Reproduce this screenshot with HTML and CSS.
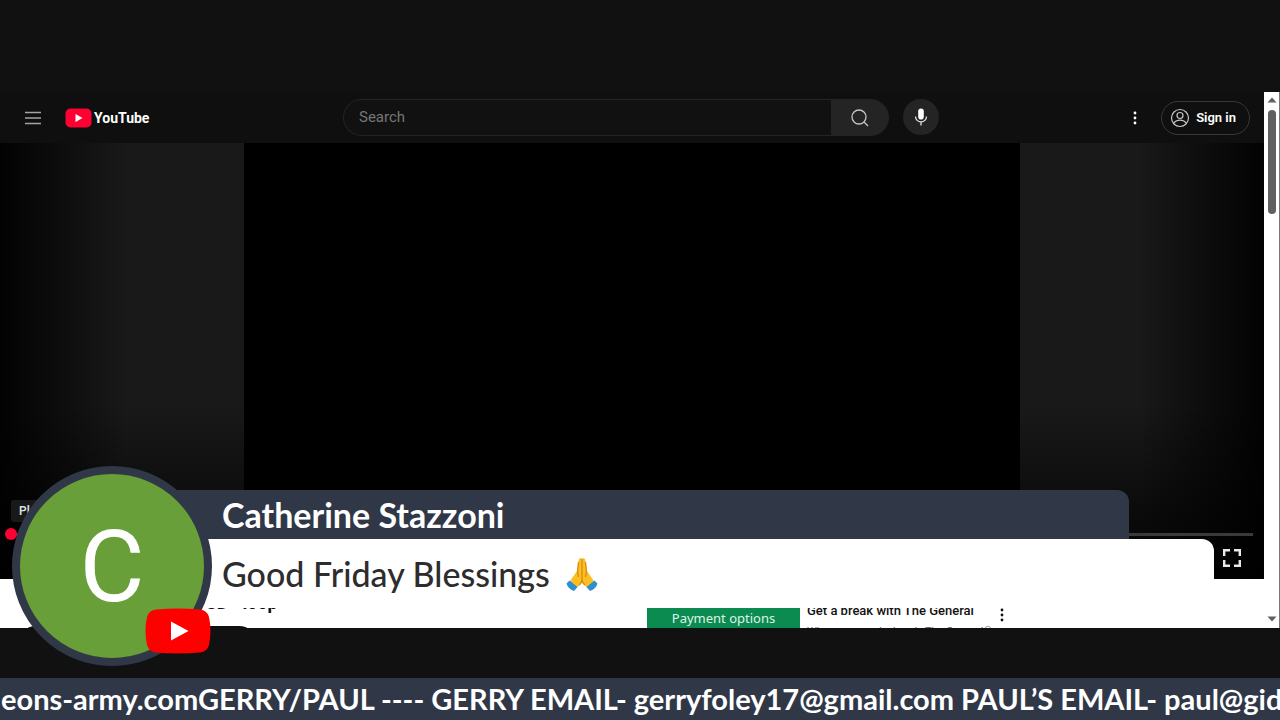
FILE: index.html
```html
<!DOCTYPE html>
<html lang="en">
<head>
<meta charset="utf-8">
<meta name="viewport" content="width=device-width, initial-scale=1">
<title>Live stream</title>
<link rel="stylesheet" href="styles.css">
</head>
<body>
<main class="stage">
  <section class="window">
    <div class="page">
      <header class="masthead">
        <div class="brand">
          <button class="icon-button" type="button" aria-label="Menu">
            <svg width="18" height="14" viewBox="0 0 18 14"><path d="M1 1.5h16M1 7h16M1 12.5h16" stroke="#a4a4a4" stroke-width="1.3"/></svg>
          </button>
          <a class="logo" href="#">
            <svg width="27" height="20" viewBox="0 0 27 20"><rect x="0.5" y="0.5" width="26" height="19" rx="5" fill="#f03"/><path d="M10.500 6v8l7-4z" fill="#fff"/></svg>
            <span>YouTube</span>
          </a>
        </div>
        <form class="search">
          <input class="search-input" type="text" placeholder="Search" aria-label="Search">
          <button class="search-button" type="button" aria-label="Submit search">
            <svg width="18" height="18" viewBox="0 0 18 18" fill="none" stroke="#c4c4c4" stroke-width="1.3"><circle cx="8" cy="8" r="7"/><path d="M13 13l4 4"/></svg>
          </button>
          <button class="mic-button" type="button" aria-label="Search with your voice">
            <svg width="14" height="18" viewBox="0 0 14 18"><rect x="4.200" y="0.500" width="5.600" height="11" rx="2.800" fill="#fff"/><path d="M1.500 8.500a5.500 5.500 0 0 0 11 0M7 14v3.500" fill="none" stroke="#ddd" stroke-width="1.300"/></svg>
          </button>
        </form>
        <div class="account">
          <button class="icon-button" type="button" aria-label="Settings">
            <svg width="4" height="14" viewBox="0 0 4 14" fill="#fff"><circle cx="2" cy="2" r="1.400"/><circle cx="2" cy="7" r="1.400"/><circle cx="2" cy="12" r="1.400"/></svg>
          </button>
          <a class="sign-in" href="#">
            <svg width="20" height="20" viewBox="0 0 20 20" fill="none" stroke="#c8c8c8" stroke-width="1.200"><circle cx="10" cy="10" r="8.500"/><circle cx="10" cy="7.500" r="3"/><path d="M3.500 15.500c3-4.500 10-4.500 13 0"/></svg>
            <span>Sign in</span>
          </a>
        </div>
      </header>
      <section class="player">
        <div class="video"></div>
        <div class="controls">
          <span class="play-tip">Play</span>
          <div class="progress"><span class="knob"></span></div>
          <button class="icon-button fullscreen" type="button" aria-label="Full screen">
            <svg width="20" height="20" viewBox="0 0 20 20" fill="none" stroke="#e8e8e8" stroke-width="2.400"><path d="M2.200 8V2.200H8M12 2.200h5.800V8M17.800 12v5.800H12M8 17.800H2.200V12"/></svg>
          </button>
        </div>
      </section>
      <section class="details">
        <div class="video-info">
          <h1 class="video-title"><span>CD</span><span>loop</span></h1>
          <div class="pill"></div>
        </div>
        <aside class="ad">
          <div class="ad-image">Payment options<br>To fit all fit</div>
          <div class="ad-text">
            <p class="ad-title">Get a break with The General</p>
            <p class="ad-copy">When you need a break, The General®</p>
          </div>
          <button class="icon-button" type="button" aria-label="More">
            <svg width="4" height="14" viewBox="0 0 4 14" fill="#111"><circle cx="2" cy="2" r="1.400"/><circle cx="2" cy="7" r="1.400"/><circle cx="2" cy="12" r="1.400"/></svg>
          </button>
        </aside>
      </section>
    </div>
    <div class="scrollbar">
      <svg width="10" height="6" viewBox="0 0 10 6"><path d="M0.500 5.500L5 0.500l4.500 5z" fill="#606060"/></svg>
      <span class="thumb"></span>
      <svg width="10" height="6" viewBox="0 0 10 6"><path d="M0.500 0.500h9L5 5.500z" fill="#606060"/></svg>
    </div>
  </section>

  <section class="banner">
    <div class="avatar">C
      <svg class="badge" width="66" height="46" viewBox="0 0 66 46"><path d="M11 1.500Q33-.5 55 1.500Q62 2 64 9Q67 23 64 37Q62 44 55 44.500Q33 46.500 11 44.500Q4 44 2 37Q-1 23 2 9Q4 2 11 1.500z" fill="#f00"/><path d="M26 13.500v19l17.500-9.500z" fill="#fff"/></svg>
    </div>
    <div class="author">Catherine Stazzoni</div>
    <div class="message">
      <span>Good Friday Blessings</span>
      <svg width="32" height="36" viewBox="0 0 32 36" role="img" aria-label="Folded hands"><path d="M15 2q-2 0-2.500 3L11 15 5.500 23 3 27l6 6 5-4 2-3 2 3 5 4 6-6-2.500-4L21 15 19.500 5Q19 2 17 2l-1 1z" fill="#fcbf22"/><path d="M12.500 6l-1 10 1 5M19.500 6l1 10-1 5M16 3v20q0 4-3 6M16 23q0 4 3 6" fill="none" stroke="#d98a12" stroke-width="1.300"/><path d="M3.500 24.500l8 6.500-3.500 4Q2 33 .5 27.500zM28.500 24.500l-8 6.500 3.500 4q6-2 7.500-7.500z" fill="#2b8fd0"/></svg>
    </div>
  </section>

  <footer class="ticker">eons-army.comGERRY/PAUL ---- GERRY EMAIL- gerryfoley17@gmail.com PAUL’S EMAIL- paul@gideons-army.com</footer>
</main>
</body>
</html>
```
FILE: styles.css
```css
* {
  box-sizing: border-box;
}

body {
  margin: 0;
  background: #111;
  font-family: Roboto, "Liberation Sans", sans-serif;
}

button,
input {
  margin: 0;
  padding: 0;
  border: 0;
  font: inherit;
}

a {
  color: inherit;
  text-decoration: none;
}

svg {
  display: block;
  flex: none;
}

.stage {
  position: relative;
  display: flex;
  flex-direction: column;
  height: 100vh;
  padding-top: 92px;
  overflow: hidden;
}

.window {
  display: flex;
  flex: 1;
  min-height: 0;
  margin-bottom: 50px;
  background: #fff;
}

.page {
  display: flex;
  flex: 1;
  flex-direction: column;
  min-width: 0;
}

.icon-button {
  background: none;
}

.masthead {
  display: grid;
  grid-template-columns: 1fr minmax(0, 596px) 1fr;
  align-items: center;
  height: 51px;
  padding: 0 14px 0 24px;
  background: #0f0f0f;
  color: #fff;
}

.brand,
.account,
.logo,
.sign-in {
  display: flex;
  align-items: center;
}

.brand {
  gap: 23px;
}

.logo {
  gap: 2px;
  font-size: 14px;
  font-weight: 700;
}

.search {
  display: flex;
  height: 37px;
  margin: 0 -4px 0 4px;
}

.search-input {
  flex: 1;
  min-width: 0;
  padding: 0 15px 2px;
  border: 1px solid #242424;
  border-right: 0;
  border-radius: 19px 0 0 19px;
  background: #111;
  color: #fff;
  font-size: 15px;
}

.search-input::placeholder {
  color: #777;
}

.search-button,
.mic-button {
  display: flex;
  align-items: center;
  justify-content: center;
  background: #242424;
}

.search-button {
  width: 58px;
  border-radius: 0 19px 19px 0;
}

.mic-button {
  width: 36px;
  height: 36px;
  margin-left: 14px;
  border-radius: 50%;
}

.account {
  justify-content: flex-end;
  gap: 24px;
}

.sign-in {
  gap: 6px;
  height: 34px;
  padding: 0 13px 0 8px;
  border: 1px solid #383838;
  border-radius: 17px;
  font-size: 13px;
  font-weight: 600;
}

.player {
  position: relative;
  display: flex;
  flex: 1;
  justify-content: center;
  min-height: 0;
  background:
    linear-gradient(transparent 60%, rgba(0, 0, 0, 0.9)),
    linear-gradient(90deg, #020202, #191919 10%, #191919 90%, #020202);
}

.video {
  width: 61.4%;
  background: #000;
}

.controls {
  position: absolute;
  right: 11px;
  bottom: 0;
  left: 11px;
  display: flex;
  flex-direction: column;
}

.play-tip {
  align-self: flex-start;
  padding: 4px 8px;
  border-radius: 3px;
  background: #191919;
  color: #ddd;
  font-size: 12px;
  font-weight: 600;
  line-height: 14px;
}

.progress {
  height: 3px;
  margin-top: 11px;
  background: #3a3a3a;
}

.knob {
  display: block;
  width: 12px;
  height: 12px;
  margin: -5px 0 0 -6px;
  border-radius: 50%;
  background: #f03;
  position: relative;
}

.fullscreen {
  align-self: flex-end;
  margin: 12px 11px 11px 0;
}

.details {
  display: flex;
  height: 49px;
  overflow: hidden;
  background: #fff;
  color: #111;
}

.video-info {
  flex: 0 0 647px;
  padding: 14px 0 0 18px;
}

.video-title {
  display: flex;
  gap: 14px;
  margin: 0 0 0 187px;
  font-size: 18px;
  line-height: 20px;
}

.pill {
  width: 239px;
  height: 36px;
  margin-top: 13px;
  border-radius: 18px;
  background: #0f0f0f;
}

.ad {
  display: flex;
  align-items: flex-start;
  gap: 7px;
}

.ad-image {
  width: 153px;
  padding-top: 32px;
  background: #0c8b50;
  color: #dff3e8;
  font: 13px/15px "Noto Sans", sans-serif;
  text-align: center;
}

.ad-text {
  width: 186px;
  padding-top: 24px;
}

.ad-title,
.ad-copy {
  margin: 0;
  white-space: nowrap;
}

.ad-title {
  font-size: 13px;
  font-weight: 500;
  line-height: 16px;
}

.ad-copy {
  margin-top: 5px;
  color: #606060;
  font-size: 11px;
  line-height: 16px;
}

.ad .icon-button {
  margin-top: 29px;
}

.scrollbar {
  display: flex;
  flex-direction: column;
  align-items: center;
  width: 16px;
  padding: 5px 0 6px 1px;
  border-right: 1px solid #777;
  background: #fff;
}

.thumb {
  width: 8px;
  height: 104px;
  margin: 7px 0 auto;
  border-radius: 4px;
  background: #606060;
}

.banner {
  position: absolute;
  right: 66px;
  bottom: 112px;
  left: 112px;
  font-family: Lato, "Liberation Sans", sans-serif;
  font-size: 34px;
}

.author {
  height: 49px;
  margin-right: 85px;
  padding-left: 110px;
  border-radius: 0 12px 0 0;
  background: #303848;
  color: #fff;
  font-weight: 700;
  line-height: 50px;
}

.message {
  display: flex;
  align-items: center;
  gap: 16px;
  height: 69px;
  padding-left: 110px;
  border-radius: 0 12px 0 0;
  background: #fff;
  color: #2d2d2d;
  font-weight: 500;
}

.avatar {
  position: absolute;
  bottom: -58px;
  left: -100px;
  width: 200px;
  height: 200px;
  border: 8px solid #303848;
  border-radius: 50%;
  background: #689f38;
  color: #fff;
  font: 100px/186px Roboto, sans-serif;
  text-align: center;
}

.badge {
  position: absolute;
  right: -7px;
  bottom: 4px;
}

.ticker {
  height: 42px;
  padding-left: 1px;
  overflow: hidden;
  background: #303848;
  color: #fff;
  font: 700 29px/42px Lato, "Liberation Sans", sans-serif;
  white-space: nowrap;
}
```
